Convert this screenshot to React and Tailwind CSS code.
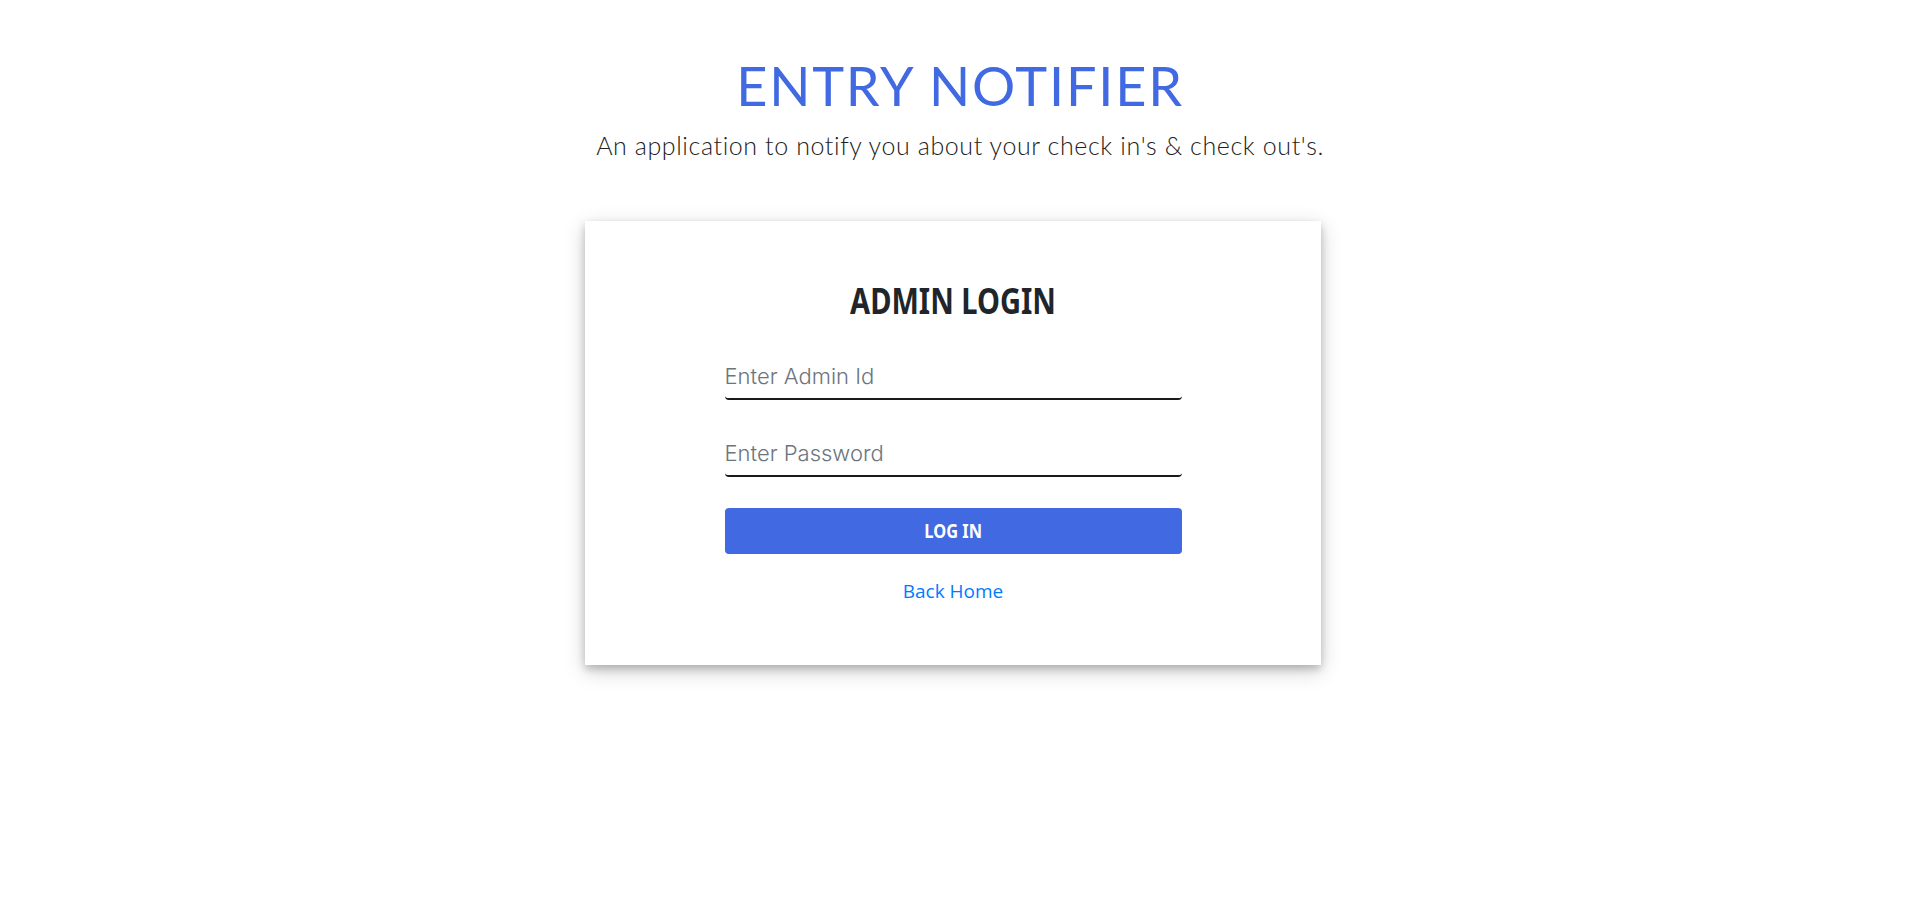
import { useState } from "react";

const AdminLogin = () => {
  const [adminId, setAdminId] = useState("");
  const [password, setPassword] = useState("");

  const handleSubmit = (e) => {
    e.preventDefault();
  };

  return (
    <div className="min-h-screen bg-white flex flex-col items-center">
      {/* Header */}
      <h1 className="mt-[53px] text-[54px] leading-[65px] tracking-[1.8px] text-[#4169e1] font-['Lato',sans-serif] font-normal">
        ENTRY NOTIFIER
      </h1>
      <p className="mt-[13px] text-[25px] leading-[29px] tracking-[0.6px] text-[#222] font-['Lato',sans-serif] font-light">
        An application to notify you about your check in's &amp; check out's.
      </p>

      {/* Login card */}
      <div className="mt-[61px] -ml-[14px] w-[736px] h-[444px] bg-white shadow-[0_4px_8px_0_rgba(0,0,0,0.2),0_6px_20px_0_rgba(0,0,0,0.19)] flex flex-col items-center pt-[60px]">
        <h2 className="text-[35px] leading-[40px] font-bold text-[#212529] font-['Noto_Sans',sans-serif] scale-x-[0.83]">
          ADMIN LOGIN
        </h2>

        <form onSubmit={handleSubmit} className="w-[457px] mt-[33px] flex flex-col">
          <input
            type="text"
            placeholder="Enter Admin Id"
            value={adminId}
            onChange={(e) => setAdminId(e.target.value)}
            className="h-[46px] w-full bg-transparent border-b-2 border-[#1a1a1a] rounded-[4px] text-[22px] font-light text-[#495057] font-['Inter',sans-serif] placeholder:text-[#6c757d] focus:outline-none"
          />
          <input
            type="password"
            placeholder="Enter Password"
            value={password}
            onChange={(e) => setPassword(e.target.value)}
            className="mt-[31px] h-[46px] w-full bg-transparent border-b-2 border-[#1a1a1a] rounded-[4px] text-[22px] font-light text-[#495057] font-['Inter',sans-serif] placeholder:text-[#6c757d] focus:outline-none"
          />
          <button
            type="submit"
            className="mt-[31px] h-[46px] w-full rounded-[4px] bg-[#4169e1] text-white font-['Noto_Sans',sans-serif]"
          >
            <span className="inline-block text-[20px] font-bold scale-x-[0.82]">LOG IN</span>
          </button>
        </form>

        <a
          href="#"
          className="mt-[24px] text-[19px] leading-[26px] text-[#007bff] font-['Open_Sans',sans-serif]"
        >
          Back Home
        </a>
      </div>
    </div>
  );
};

export default AdminLogin;
